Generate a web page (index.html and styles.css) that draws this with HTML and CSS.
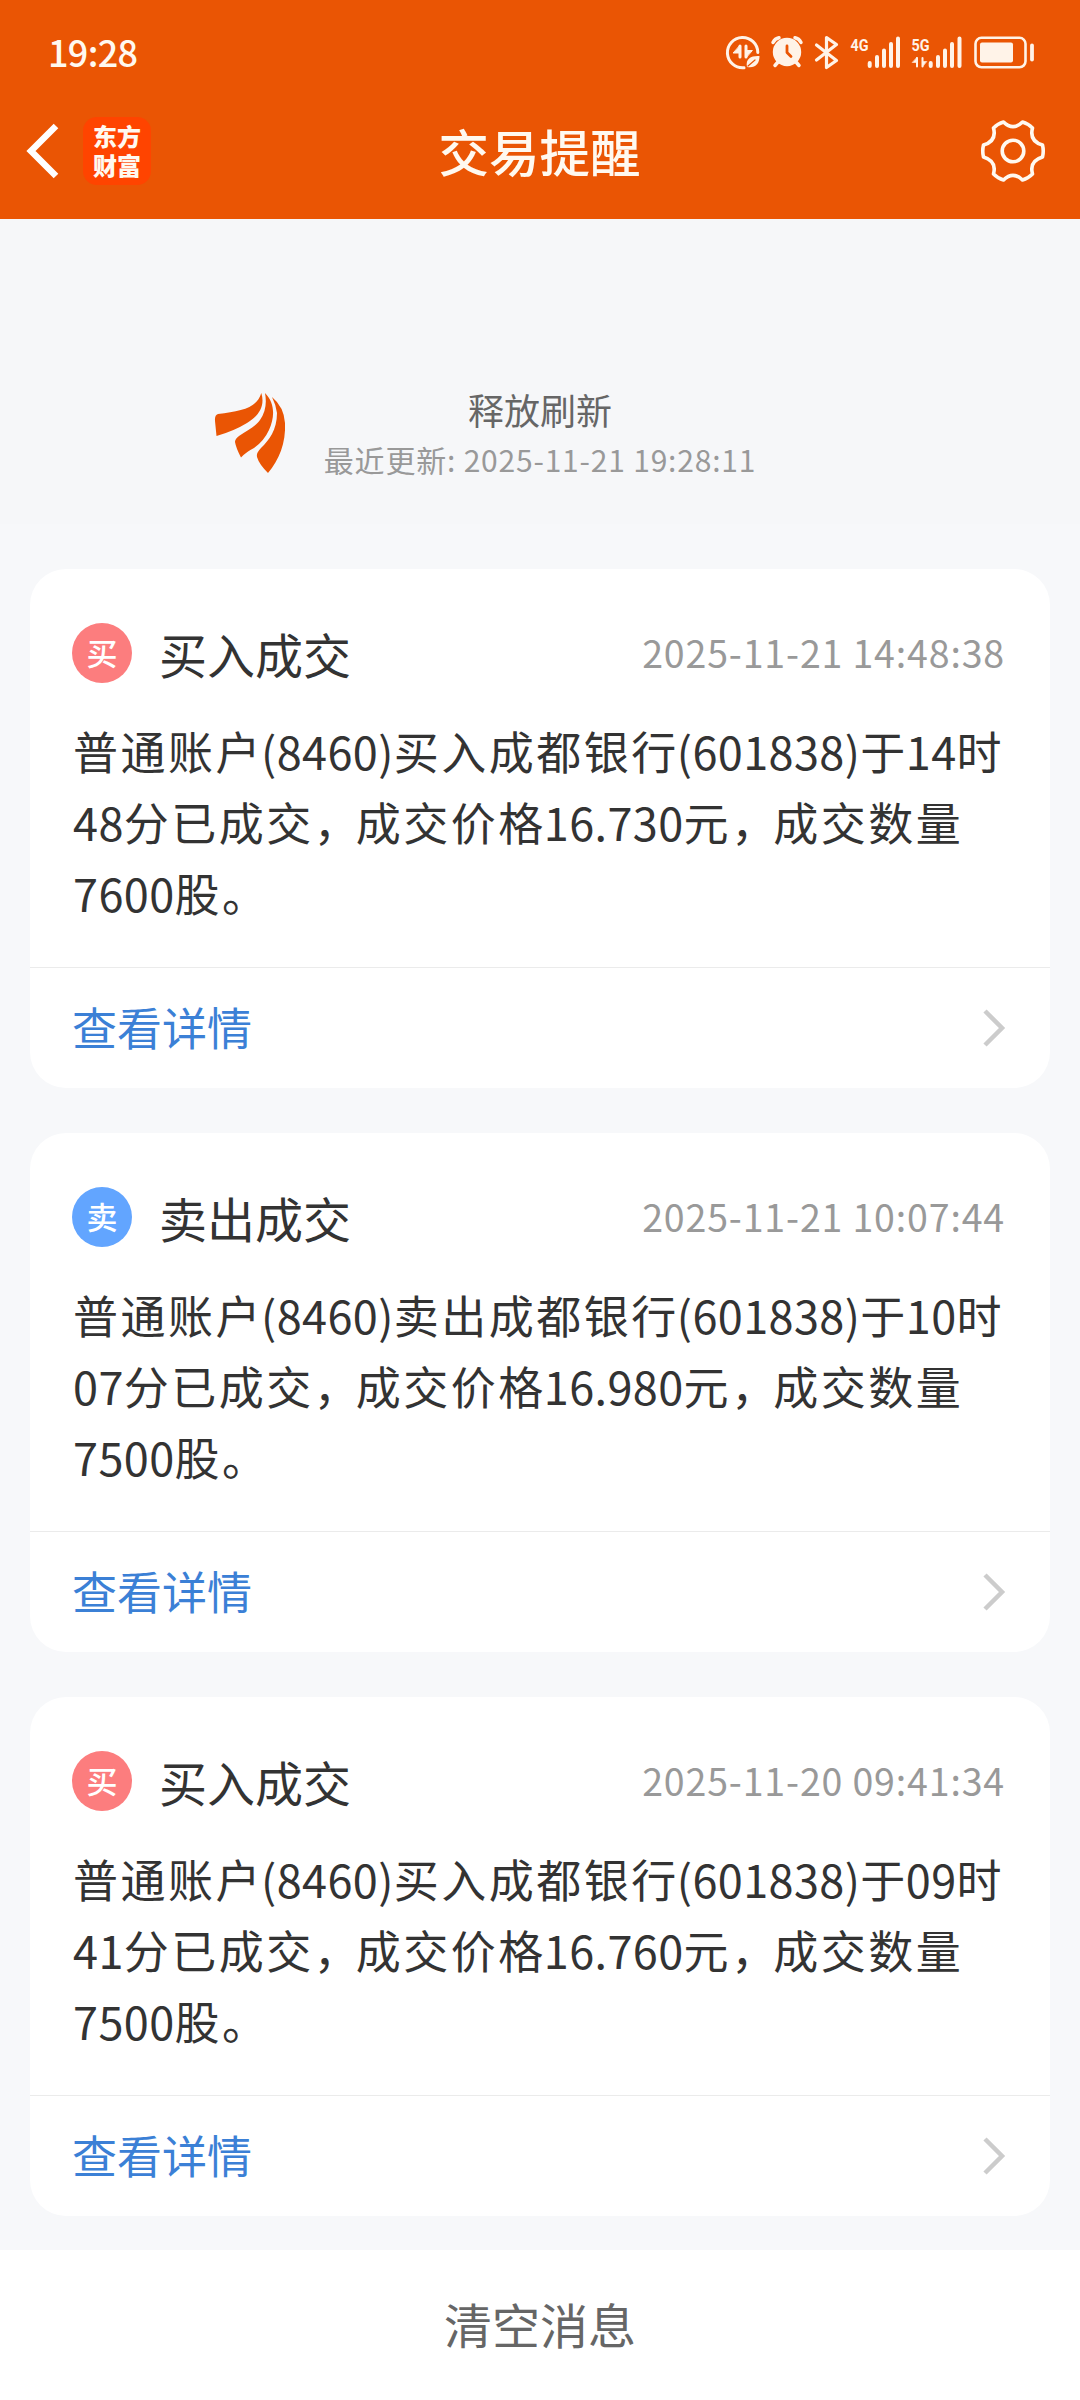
FILE: index.html
```html
<!DOCTYPE html>
<html lang="zh-CN">

<head>
    <meta charset="UTF-8">
    <meta name="viewport" content="width=device-width, initial-scale=1.0">
    <title>交易提醒</title>

    <link rel="stylesheet" href="styles.css">
</head>

<body>
    <div class="header">
        <div class="statusBar">
            <span class="clock">19:28</span>
            <svg class="statusIcons" width="312" height="40" viewBox="724 32 312 40" fill="none" stroke="#fff3e8" stroke-linecap="round" stroke-linejoin="round">
                <!-- data saver -->
                <path d="M757.8 52.5A15.2 15.2 0 1 0 744 67.8" stroke-width="3" />
                <path d="M740 46V57M746 46V57" stroke-width="3" />
                <path d="M740 45.5V53H733.500ZM746 57.500V50.500H752Z" fill="#fff3e8" stroke-width="1" />
                <path d="M747 67C745 58 752 55.500 759.500 56C759.500 64 755 68.500 747 67Z" fill="#fff3e8" stroke="none" />
                <path d="M748 66L755 60" stroke="#ea5504" stroke-width="1.2" />
                <!-- alarm -->
                <circle cx="787" cy="52" r="14.2" fill="#fff3e8" stroke="none" />
                <path d="M773 42.500Q775 38.500 779 37.800M801 42.500Q799 38.500 795 37.800M778 62L775 65.500M796 62L799 65.500" stroke-width="3.5" />
                <path d="M787 46V52.500L791 56.500" stroke="#ea5504" stroke-width="2.800" />
                <!-- bluetooth -->
                <path d="M816.500 45L836.500 60.500L826.500 67.500V37.500L836.500 44.500L816.500 60" stroke-width="3.2" />
                <!-- signal -->
                <path d="M869.700 63V66M877 57V66M884 50.500V66M891 44V66M898 38.500V66" stroke-width="4" />
                <path d="M930.700 63V66M938 57V66M945 50.500V66M952 44V66M959.500 38.500V66" stroke-width="4" />
                <path d="M917 58V66.500M922.500 58V66.500" stroke-width="2" />
                <path d="M917 57.500V62.500H912.500ZM922.500 66.500V61.500H926.500Z" fill="#fff3e8" stroke-width="0.600" />
                <!-- battery -->
                <rect x="975.500" y="37.800" width="50" height="29.500" rx="6" stroke-width="2.600" />
                <rect x="980" y="42.500" width="33" height="20" rx="2" fill="#fff3e8" stroke="none" />
                <path d="M1032 45.500V59.500" stroke-width="3.800" />
                <g class="netType">
                    <text x="850.500" y="50.500" textLength="18" lengthAdjust="spacingAndGlyphs">4G</text>
                    <text x="911.500" y="50.500" textLength="18" lengthAdjust="spacingAndGlyphs">5G</text>
                </g>
            </svg>
        </div>
        <div class="navBar">
            <div class="navLeft">
                <svg width="34" height="58" viewBox="0 0 34 58" fill="none" stroke="#fff" stroke-width="6.5">
                    <path d="M30 4L5 29L30 54" />
                </svg>
                <div class="appLogo">东方<br>财富</div>
            </div>
            <h1>交易提醒</h1>
            <svg class="gear" width="66" height="66" viewBox="-33 -33 66 66" fill="none" stroke="#fff9f0" stroke-width="3.6" stroke-linejoin="round">
                <path d="M-9.500 -29Q0 -19.500 9.500 -29Q15 -27.500 19.500 -23Q16 -10 29.500 -6Q31 0 29.500 6Q16 10 19.500 23Q15 27.500 9.500 29Q0 19.500 -9.500 29Q-15 27.500 -19.500 23Q-16 10 -29.500 6Q-31 0 -29.500 -6Q-16 -10 -19.500 -23Q-15 -27.500 -9.500 -29Z" />
                <circle r="10.800" />
            </svg>
        </div>
    </div>

    <div class="refresh">
        <svg class="refreshLogo" width="72" height="82" viewBox="0 0 72 82" fill="#ea5504">
            <path d="M47.300 0C43 15 27 18 4 21Q0.500 22 1 28L2.500 43Q20 38 33 30C46 22 51 12 47.300 0Z" />
            <path d="M51 0C61 10 61 24 55 37Q50 48 40 55Q32 59 27 64.500Q22 55 21 49Q21 46 25 43C33 37 41 34 46 27Q54 16 51 0Z" />
            <path d="M58 4Q70 14 71 30C72 50 65 67 54 80Q45 71 43 64Q42 60 47 55C55 47 63 37 63 20Q62 12 58 4Z" />
        </svg>
        <p class="refreshText">释放刷新</p>
        <p class="refreshTime">最近更新: 2025-11-21 19:28:11</p>
    </div>

    <div class="msgList">
        <div class="card">
            <div class="cardTop">
                <span class="tag buy">买</span>
                <h2>买入成交</h2>
                <span class="time">2025-11-21 14:48:38</span>
            </div>
            <p class="cardMsg">普通账户<i>(8460)</i>买入成都银行<i>(601838)</i>于<i>14</i>时<br><i>48</i>分已成交<b>，</b>成交价格<i>16.730</i>元<b>，</b>成交数量<br><i>7600</i>股。</p>
            <div class="cardLink">
                <span>查看详情</span>
                <svg width="24" height="40" viewBox="0 0 24 40" fill="none" stroke="#ccc" stroke-width="4.500"><path d="M3 3L20 20L3 37" /></svg>
            </div>
        </div>

        <div class="card">
            <div class="cardTop">
                <span class="tag sell">卖</span>
                <h2>卖出成交</h2>
                <span class="time">2025-11-21 10:07:44</span>
            </div>
            <p class="cardMsg">普通账户<i>(8460)</i>卖出成都银行<i>(601838)</i>于<i>10</i>时<br><i>07</i>分已成交<b>，</b>成交价格<i>16.980</i>元<b>，</b>成交数量<br><i>7500</i>股。</p>
            <div class="cardLink">
                <span>查看详情</span>
                <svg width="24" height="40" viewBox="0 0 24 40" fill="none" stroke="#ccc" stroke-width="4.500"><path d="M3 3L20 20L3 37" /></svg>
            </div>
        </div>

        <div class="card">
            <div class="cardTop">
                <span class="tag buy">买</span>
                <h2>买入成交</h2>
                <span class="time">2025-11-20 09:41:34</span>
            </div>
            <p class="cardMsg">普通账户<i>(8460)</i>买入成都银行<i>(601838)</i>于<i>09</i>时<br><i>41</i>分已成交<b>，</b>成交价格<i>16.760</i>元<b>，</b>成交数量<br><i>7500</i>股。</p>
            <div class="cardLink">
                <span>查看详情</span>
                <svg width="24" height="40" viewBox="0 0 24 40" fill="none" stroke="#ccc" stroke-width="4.500"><path d="M3 3L20 20L3 37" /></svg>
            </div>
        </div>
    </div>

    <div class="clearBar">清空消息</div>
</body>

</html>
```
FILE: styles.css
```css
* {
    box-sizing: border-box;
}

body {
    font-family: "Noto Sans CJK SC", "Noto Sans", sans-serif;
    background-color: #f7f8fa;
    color: #333;
    margin: 0;
    height: 2400px;
    display: flex;
    flex-direction: column;
    overflow: hidden;
}

h1,
h2,
p {
    margin: 0;
    font-weight: normal;
}

svg {
    display: block;
}

.header {
    height: 219px;
    background-color: #ea5504;
    color: #fff9f0;
}

.statusBar {
    height: 104px;
    padding: 0 44px 0 48px;
    display: flex;
    align-items: center;
    justify-content: space-between;
}

.clock {
    padding-bottom: 3px;
    font-size: 36px;
    font-weight: 500;
    line-height: 40px;
    letter-spacing: -0.7px;
}

.netType {
    font-family: "Roboto", sans-serif;
    font-size: 17px;
    font-weight: bold;
    fill: #fff3e8;
    stroke: none;
}

.navBar {
    height: 94px;
    padding: 0 34px 0 26px;
    display: grid;
    grid-template-columns: 1fr auto 1fr;
    align-items: center;
}

.navLeft {
    display: flex;
    align-items: center;
    gap: 23px;
}

.appLogo {
    width: 68px;
    height: 68px;
    padding-top: 4px;
    border-radius: 14px;
    background-color: #ff4400;
    font-size: 24px;
    font-weight: 900;
    line-height: 29px;
    text-align: center;
}

h1 {
    padding: 0 0 3px 7px;
    font-size: 50.5px;
    font-weight: 500;
    line-height: 60px;
}

.gear {
    justify-self: end;
}

.refresh {
    height: 305px;
    padding-top: 163px;
    position: relative;
    background-color: #f6f7f9;
    text-align: center;
}

.refreshLogo {
    position: absolute;
    left: 214px;
    top: 174px;
}

.refreshText {
    font-size: 36px;
    line-height: 54px;
    color: #666;
}

.refreshTime {
    padding-top: 1px;
    font-size: 30px;
    line-height: 44px;
    letter-spacing: 0.8px;
    color: #999;
}

.msgList {
    flex: 1;
    padding: 45px 30px 0;
    display: flex;
    flex-direction: column;
    gap: 45px;
}

.card {
    height: 519px;
    background-color: #fff;
    border-radius: 36px;
    display: flex;
    flex-direction: column;
}

.cardTop {
    display: flex;
    align-items: center;
    padding: 54px 45px 0 42px;
    height: 114px;
}

.tag {
    width: 60px;
    height: 60px;
    border-radius: 50%;
    color: #fff;
    font-size: 31px;
    font-weight: 500;
    line-height: 58px;
    text-align: center;
}

.buy {
    background-color: #fc7d7e;
}

.sell {
    background-color: #62a5ff;
}

h2 {
    margin-left: 27px;
    font-size: 48px;
    line-height: 60px;
}

.time {
    margin-left: auto;
    padding-bottom: 2px;
    font-size: 37.5px;
    line-height: 60px;
    letter-spacing: 0.85px;
    color: #999;
}

.cardMsg {
    flex: 1;
    padding: 32px 0 0 43px;
    font-size: 45px;
    line-height: 71px;
    letter-spacing: 2.5px;
    white-space: nowrap;
}

.cardMsg i {
    margin-left: -2px;
    font-style: normal;
    letter-spacing: 0.4px;
}

.cardMsg br + i {
    margin-left: 0;
}

.cardMsg b {
    font-weight: normal;
    letter-spacing: -3px;
}

.cardLink {
    height: 121px;
    padding: 0 44px 0 42px;
    border-top: 1px solid #ebebeb;
    display: flex;
    align-items: center;
    justify-content: space-between;
    font-size: 45px;
    line-height: 60px;
    color: #3b80d6;
}

.cardLink span {
    padding-bottom: 3px;
}

.clearBar {
    height: 150px;
    background-color: #fff;
    color: #666;
    font-size: 48px;
    line-height: 146px;
    text-align: center;
}
```
